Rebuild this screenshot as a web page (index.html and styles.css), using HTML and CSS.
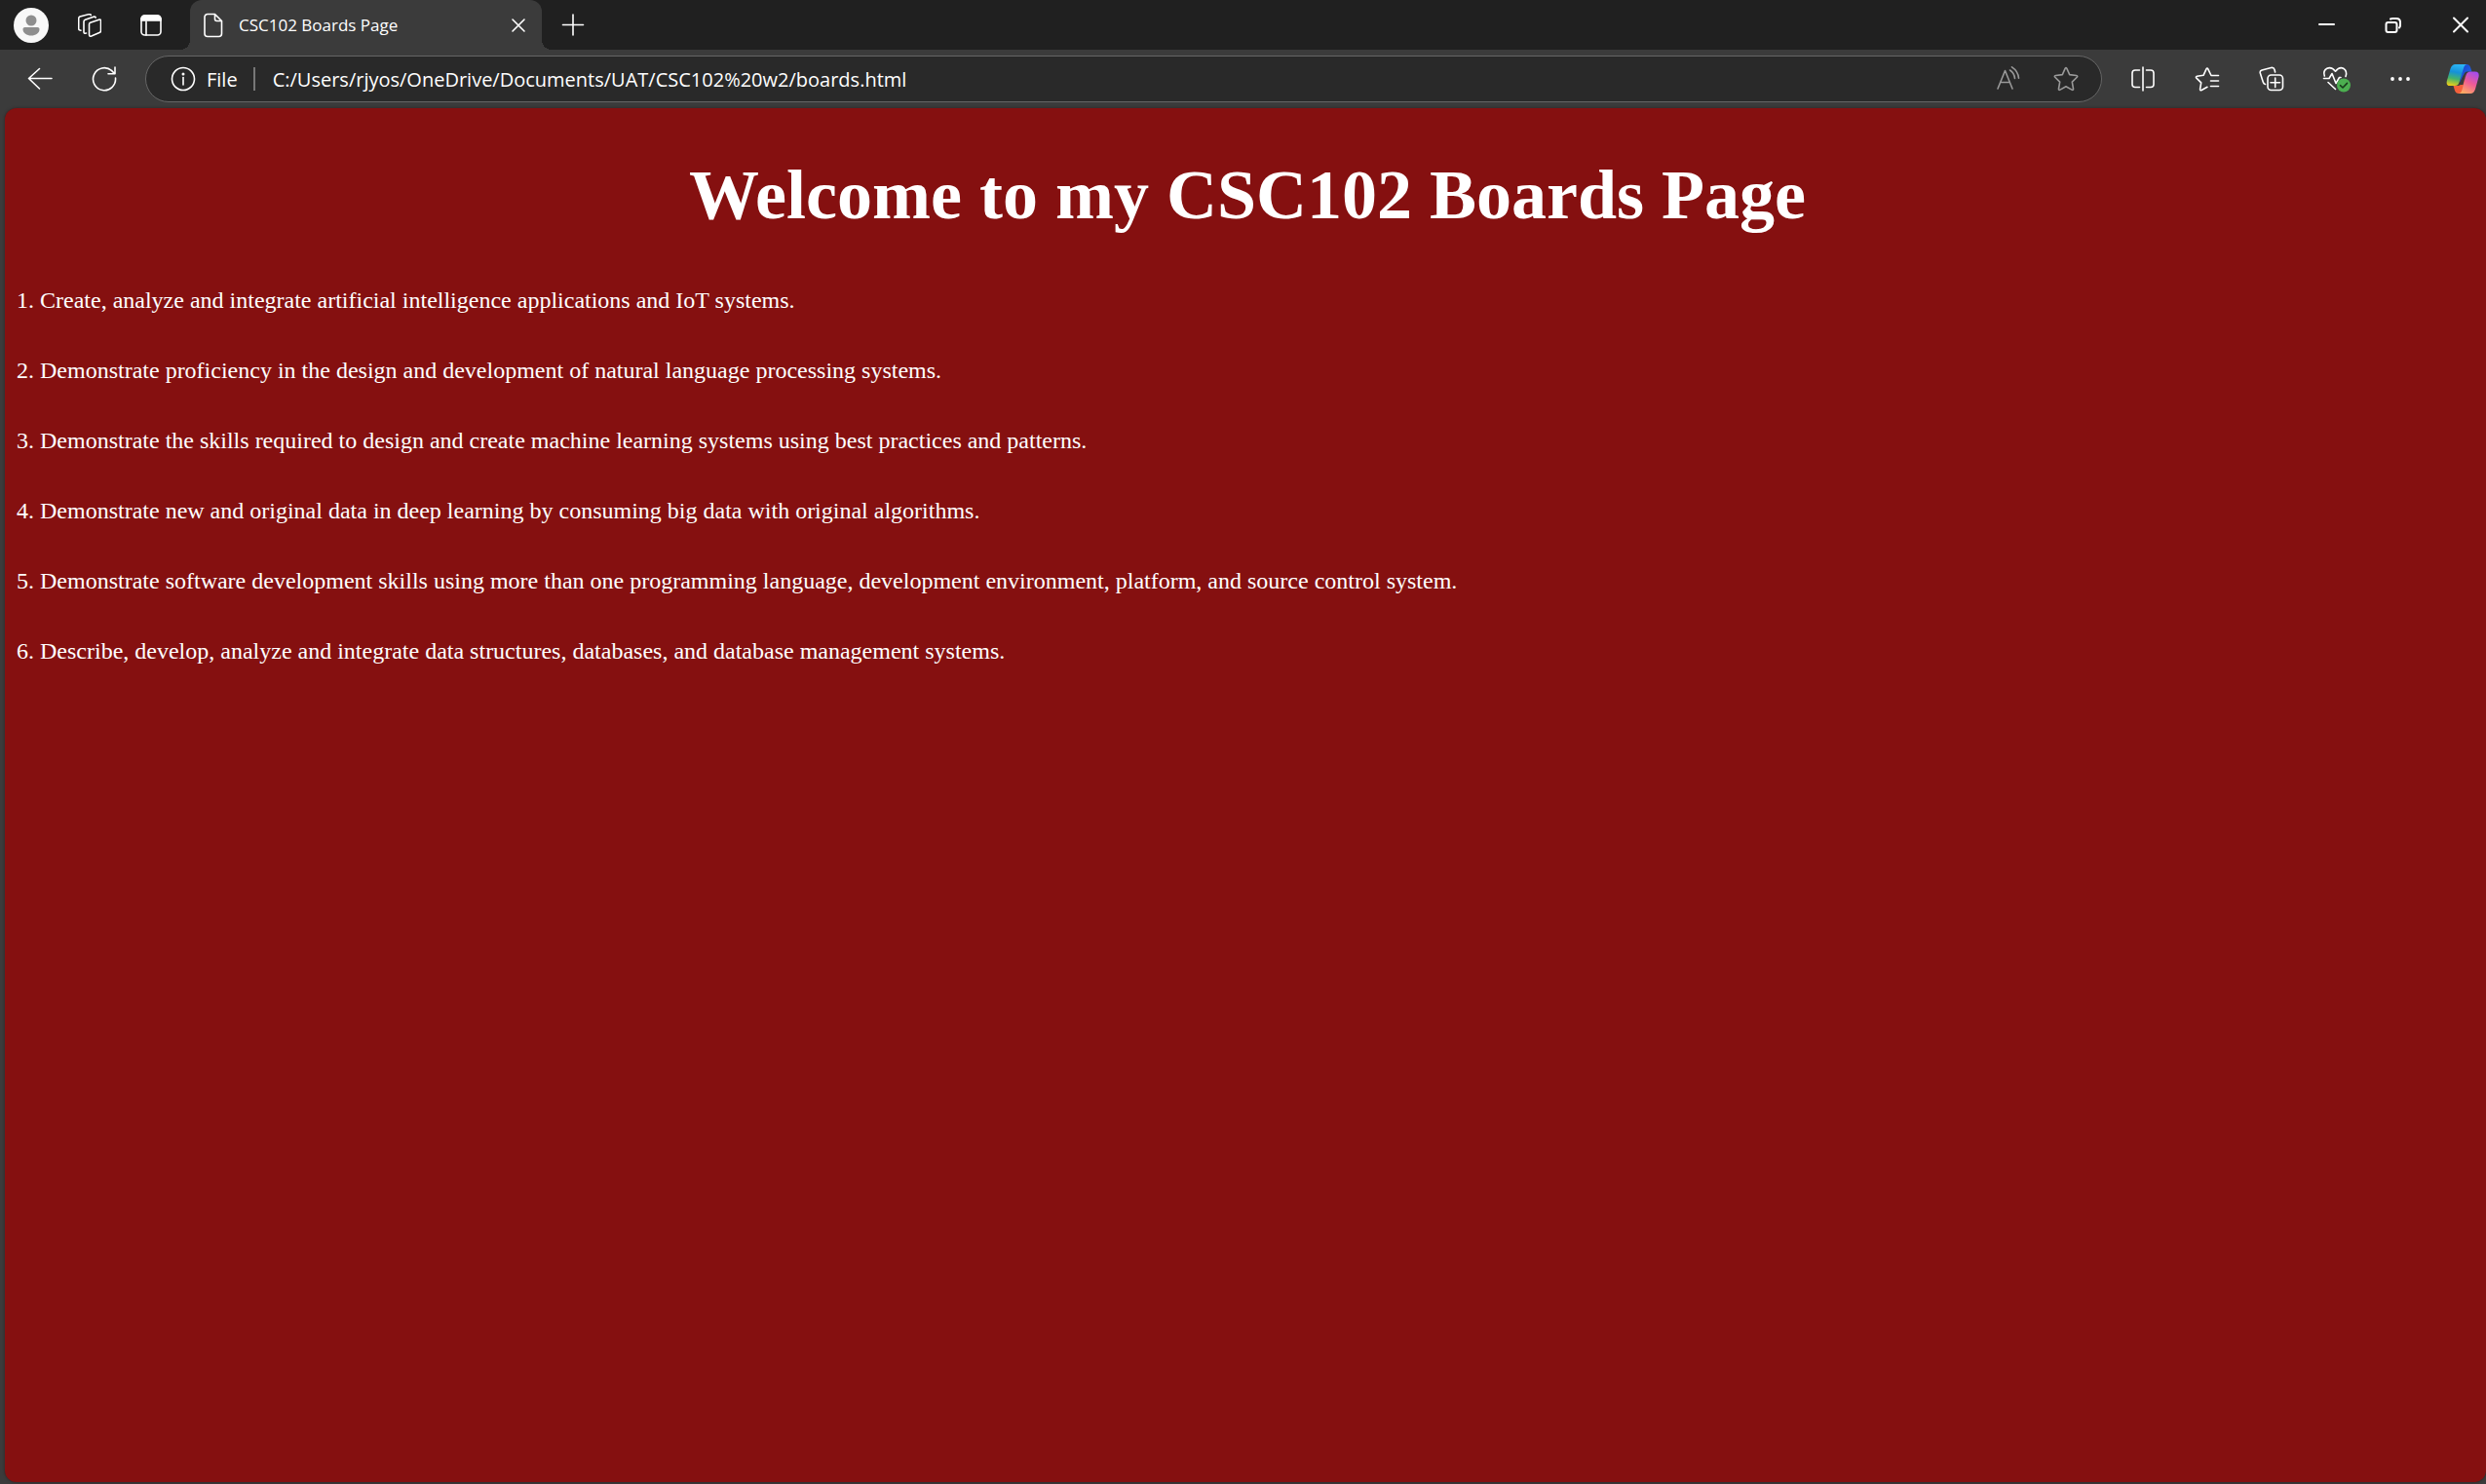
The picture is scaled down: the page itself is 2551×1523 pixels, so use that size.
FILE: index.html
```html
<!DOCTYPE html>
<html lang="en">
<head>
<meta charset="utf-8">
<title>CSC102 Boards Page</title>
<link rel="stylesheet" href="styles.css">
</head>
<body>
<div class="browser">
  <header class="tabstrip">
    <button class="icon-btn profile" aria-label="Profile">
      <svg width="36" height="36" viewBox="0 0 36 36"><circle cx="18" cy="18" r="18" fill="#f8f8f8"/><circle cx="18" cy="13" r="5.5" fill="#8e8e8e"/><path d="M11.500 20h13c1.500 0 2 1 2 2 0 4-4 6.500-8.500 6.500S9.500 26 9.500 22c0-1 .5-2 2-2z" fill="#8e8e8e"/></svg>
    </button>
    <div class="strip-tools">
      <button class="icon-btn" aria-label="Workspaces">
        <svg class="line" width="24" height="24" viewBox="0 0 24 24"><path d="M12.600 9.200 21.500 6.200Q23.500 5.600 23.500 7.600V17.500Q23.500 19 22 19.600L13.800 23Q11.500 23.800 11.500 21.500V11Q11.500 9.600 12.600 9.200zM8.500 20 7.500 20.300Q6 20.500 6 18.800V8.300Q6 6.800 7.400 6.300L16 3.200Q17.500 2.700 18.200 4M3 17.200 2 17Q.7 16.800.7 15.300V5Q.7 3.600 2 3.100L11.500.6Q12.800.3 13.300 1.500"/></svg>
      </button>
      <button class="icon-btn" aria-label="Tab actions">
        <svg class="line" width="24" height="24" viewBox="0 0 24 24"><rect x="2" y="2" width="20" height="20" rx="3.500"/><path d="M2 7V5.500A3.500 3.500 0 0 1 5.500 2h13A3.500 3.500 0 0 1 22 5.500V7z" fill="#fff"/><path d="M7 8v14"/></svg>
      </button>
    </div>
    <div class="tab">
      <svg class="line" width="20" height="26" viewBox="0 0 20 26"><path d="M4 1.500h7.500L18.500 8.500V21.500a3 3 0 0 1-3 3H4a3 3 0 0 1-3-3v-17a3 3 0 0 1 3-3zM11.500 1.500V6.500a2 2 0 0 0 2 2h5"/></svg>
      <span class="tab-title">CSC102 Boards Page</span>
      <button class="icon-btn" aria-label="Close tab">
        <svg class="line" width="24" height="24" viewBox="0 0 24 24"><path d="M6 6l12 12M18 6 6 18"/></svg>
      </button>
    </div>
    <button class="icon-btn new-tab" aria-label="New tab">
      <svg class="line" width="24" height="24" viewBox="0 0 24 24"><path d="M12 1v21M1.500 11.500h21"/></svg>
    </button>
    <div class="window-controls">
      <button class="icon-btn" aria-label="Minimize"><svg class="line" width="24" height="24" viewBox="0 0 24 24"><path class="bold" d="M5 11h15"/></svg></button>
      <button class="icon-btn" aria-label="Restore"><svg class="line" width="24" height="24" viewBox="0 0 24 24"><g class="bold"><rect x="4.500" y="9" width="11" height="10" rx="2"/><path d="M9 5.500Q10 5 11 5h4q4 0 4 4v3q0 1.500-1 2.500"/></g></svg></button>
      <button class="icon-btn" aria-label="Close"><svg class="line" width="24" height="24" viewBox="0 0 24 24"><path class="bold" d="M5 4.500l14 14M19 4.500l-14 14"/></svg></button>
    </div>
  </header>

  <div class="toolbar">
    <div class="tools">
      <button class="tool" aria-label="Back"><svg class="line" width="26" height="26" viewBox="0 0 26 26"><path d="M25 12.500H1.500M12.500 2.500l-11 10 11 10.500"/></svg></button>
      <button class="tool" aria-label="Refresh"><svg class="line" width="26" height="26" viewBox="0 0 26 26"><path d="M24.500 12A11.500 11.500 0 1 1 20.500 4.400L23.500 7.500M24 1v6.800H17"/></svg></button>
    </div>
    <form class="address">
      <button type="button" class="site-info">
        <svg class="line" width="26" height="26" viewBox="0 0 26 26"><circle cx="13" cy="13" r="11.500"/><path d="M13 11.500V19"/><circle cx="13" cy="8" r=".7" fill="#fff"/></svg>
        <span>File</span>
      </button>
      <input class="url" type="text" aria-label="Address" value="C:/Users/rjyos/OneDrive/Documents/UAT/CSC102%20w2/boards.html">
      <div class="address-tools">
        <button type="button" class="icon-btn" aria-label="Read aloud"><svg class="line dim" width="26" height="26" viewBox="0 0 26 26"><path d="M2 23 9.500 4.500 17 23M4.800 16.500h9.500M14.500 4q4.500 3 5 8.500M16.500.8q6.500 4.200 7 11.500"/></svg></button>
        <button type="button" class="icon-btn" aria-label="Add to favorites"><svg class="line dim" width="26" height="26" viewBox="0 0 26 26"><path d="M12.100 2.400q.9-1.800 1.800 0l2.800 6.200 6.900.9q1.900.4.600 1.800l-4.900 4.800 1.200 6.900q.2 1.900-1.500 1.100L13 20.800l-6 3.300q-1.700.8-1.500-1.100l1.200-6.900-4.900-4.800q-1.300-1.400.6-1.800l6.900-.9z"/></svg></button>
      </div>
    </form>
    <div class="tools">
      <button class="tool" aria-label="Split screen"><svg class="line" width="26" height="26" viewBox="0 0 26 26"><path d="M13 1v24M9.500 4H5Q2 4 2 7v11.500q0 3 3 3h4.500M16.500 4H21q3 0 3 3v11.500q0 3-3 3h-4.500"/></svg></button>
      <button class="tool" aria-label="Favorites"><svg class="line" width="26" height="26" viewBox="0 0 26 26"><path d="M24.500 9.500h-7.500l-3.200-6.600q-.9-1.800-1.800 0L9 9.300l-6.500 1q-1.800.5-.6 1.800l4.800 4.800-1.100 6.500q-.1 1.900 1.600 1.100l5.800-3.200M16.500 15h8M16.500 20.500h8"/></svg></button>
      <button class="tool" aria-label="Collections"><svg class="line" width="26" height="26" viewBox="0 0 26 26"><rect x="9" y="9" width="15.500" height="15.500" rx="3.500"/><path d="M16.700 12v9.500M12 16.700h9.500M6.500 18.500Q4.700 18 4.200 16L1.300 7Q.7 4.800 3 4L12.500 1.500Q15.300 1 16 3.500L16.600 6"/></svg></button>
      <button class="tool" aria-label="Browser essentials"><svg class="line" width="30" height="28" viewBox="0 0 30 28"><path d="M3.300 11Q1.500 5.500 5.800 3.300 10.500 1.200 14.500 6.200 18.500 1.200 22.700 3.300 27 6 25 11.500M2.500 13.500H8L11 8.500 15 18.500 18.500 12.500H20M7 17.500l7.500 7"/><circle cx="23" cy="20.500" r="7" fill="#4caf50" stroke="none"/><path d="M19.500 20.700l2.500 2.300 4.500-4.600" stroke="#193b1b"/></svg></button>
      <button class="tool" aria-label="Settings and more"><svg width="26" height="26" viewBox="0 0 26 26" fill="#fff"><circle cx="5" cy="13" r="1.900"/><circle cx="13" cy="13" r="1.900"/><circle cx="21" cy="13" r="1.900"/></svg></button>
      <button class="tool copilot" aria-label="Copilot">
        <svg width="34" height="32" viewBox="0 0 34 32">
          <defs>
            <linearGradient id="cool" x1=".4" y1="0" x2=".2" y2="1"><stop offset="0" stop-color="#2bb4f4"/><stop offset=".35" stop-color="#1591d8"/><stop offset=".65" stop-color="#43b36c"/><stop offset="1" stop-color="#f2cf16"/></linearGradient>
            <linearGradient id="warm" x1=".8" y1="0" x2=".3" y2="1"><stop offset="0" stop-color="#a24cf0"/><stop offset=".5" stop-color="#ee5b96"/><stop offset="1" stop-color="#ffab62"/></linearGradient>
            <linearGradient id="blue" x1="0" y1="0" x2="1" y2="1"><stop offset="0" stop-color="#1a3fc4"/><stop offset="1" stop-color="#2272f2"/></linearGradient>
          </defs>
          <path d="M16 1h5q3 0 4 3l1.500 4.500h-5Q19 8.500 18 12l-4 8z" fill="url(#blue)"/>
          <path d="M18 31h-5q-3 0-4-3l-1.500-5H12q3 0 4-3l4-8z" fill="#f4603b"/>
          <path d="M9.500 1H22q-3 0-4 4l-4.500 14.500Q12.500 23 9 23H4Q-.5 23 1 17.500L4.500 5.500Q6 1 9.500 1z" fill="url(#cool)"/>
          <path d="M25 8.500h5q4.500 0 3.500 5.500L30 26.500Q28.500 31 25 31H12.500q3 0 4-4L20.500 12q1-3.500 4.500-3.500z" fill="url(#warm)"/>
          <path d="M17.500 12.500h2.500l-2.600 9.500h-4z" fill="#3b3b3b"/>
        </svg>
      </button>
    </div>
  </div>

  <main class="page">
    <h1>Welcome to my CSC102 Boards Page</h1>
    <div class="outcomes">
      <p>1. Create, analyze and integrate artificial intelligence applications and IoT systems.</p>
      <p>2. Demonstrate proficiency in the design and development of natural language processing systems.</p>
      <p>3. Demonstrate the skills required to design and create machine learning systems using best practices and patterns.</p>
      <p>4. Demonstrate new and original data in deep learning by consuming big data with original algorithms.</p>
      <p>5. Demonstrate software development skills using more than one programming language, development environment, platform, and source control system.</p>
      <p>6. Describe, develop, analyze and integrate data structures, databases, and database management systems.</p>
    </div>
  </main>
</div>
</body>
</html>
```
FILE: styles.css
```css
* {
  box-sizing: border-box;
}

body {
  margin: 0;
  background: #3b3b3b;
  color: #fff;
  font-family: "Open Sans", "Noto Sans", sans-serif;
}

button {
  padding: 0;
  border: 0;
  background: none;
  color: inherit;
  font: inherit;
}

svg {
  display: block;
  flex: none;
}

.line {
  fill: none;
  stroke: #fff;
  stroke-width: 1.6;
  stroke-linecap: round;
  stroke-linejoin: round;
}

.bold {
  stroke-width: 2;
}

.dim {
  stroke: #999;
}

.browser {
  display: flex;
  flex-direction: column;
  min-height: 100vh;
  padding-bottom: 2px;
}

/* Tab strip */
.tabstrip {
  display: flex;
  align-items: center;
  height: 51px;
  padding: 0 14px;
  background: #202020;
}

.strip-tools {
  display: flex;
  gap: 39px;
  margin: 0 28px 0 30px;
}

.tab {
  position: relative;
  display: flex;
  align-items: center;
  gap: 16px;
  width: 361px;
  height: 100%;
  padding: 0 12px 0 14px;
  border-radius: 12px 12px 0 0;
  background: #3b3b3b;
  font-size: 17px;
}

/* Curved feet joining the tab to the toolbar */
.tab::before,
.tab::after {
  content: "";
  position: absolute;
  bottom: 0;
  width: 10px;
  height: 10px;
}

.tab::before {
  right: 100%;
  background: radial-gradient(circle at 0 0, #202020 10px, #3b3b3b 10px);
}

.tab::after {
  left: 100%;
  background: radial-gradient(circle at 100% 0, #202020 10px, #3b3b3b 10px);
}

.tab-title {
  flex: 1;
}

.new-tab {
  margin-left: 20px;
}

.window-controls {
  display: flex;
  gap: 45px;
  margin-left: auto;
}

/* Toolbar */
.toolbar {
  display: flex;
  align-items: center;
  gap: 9px;
  height: 60px;
  padding-left: 8px;
}

.tools {
  display: flex;
}

.tool {
  display: flex;
  align-items: center;
  justify-content: center;
  width: 66px;
  height: 48px;
}

.copilot {
  justify-content: flex-end;
  width: 55px;
  padding-right: 7px;
}

.address {
  display: flex;
  flex: 1;
  align-items: center;
  height: 48px;
  padding: 0 23px 0 25px;
  border: 1px solid #666;
  border-radius: 24px;
  background: #292929;
  font-size: 20px;
}

.site-info {
  display: flex;
  align-items: center;
  gap: 11px;
  height: 24px;
  padding-right: 16px;
  border-right: 2px solid #777;
}

.url {
  flex: 1;
  min-width: 0;
  padding: 0 0 0 18px;
  border: 0;
  outline: 0;
  background: none;
  color: inherit;
  font: inherit;
}

.address-tools {
  display: flex;
  gap: 33px;
}

/* Page content */
.page {
  flex: 1;
  margin-left: 5px;
  padding: 47px 8px 48px 12px;
  border-radius: 12px;
  background: #851010;
  box-shadow: 0 0 3px #2b2222;
  font-family: "Liberation Serif", "Times New Roman", serif;
}

h1 {
  margin: 0 0 52px;
  font-size: 72px;
  line-height: 84px;
  text-align: center;
}

.outcomes {
  display: grid;
  gap: 44px;
}

.outcomes p {
  margin: 0;
  font-size: 24px;
  line-height: 28px;
}
```
